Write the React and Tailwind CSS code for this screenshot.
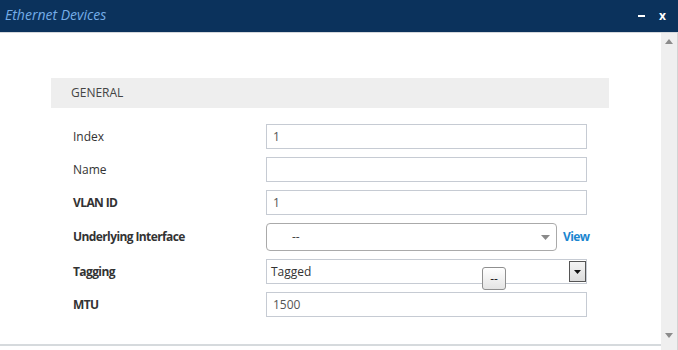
import React from 'react'

const rows = [
  { label: 'Index', value: '1' },
  { label: 'Name', value: '' },
  { label: 'VLAN ID', value: '1', bold: true },
]

const TextBox = ({ value }) => (
  <div className="h-[25px] w-[321px] border border-[#c6cbd3] bg-white pl-[6px] flex items-center text-[12px] text-[#555]">
    {value}
  </div>
)

const Label = ({ children, bold }) => (
  <div className={`text-[12px] text-[#333] ${bold ? 'font-bold tracking-[-0.6px]' : ''}`}>{children}</div>
)

export default function App() {
  return (
    <div className="w-[678px] h-[350px] bg-white overflow-hidden flex flex-col" style={{ fontFamily: '"Open Sans", sans-serif' }}>
      {/* title bar */}
      <div className="h-[32px] bg-[#0b325c] flex items-center justify-between shrink-0">
        <span className="pl-[5px] italic text-[14px] text-[#75ade8] -mt-[4px]">Ethernet Devices</span>
        <div className="flex items-center gap-[14px] pr-[12px] -mt-[1px]">
          <div className="w-[7px] h-[2px] bg-white" />
          <span className="text-white text-[12px] font-bold leading-none">x</span>
        </div>
      </div>
      <div className="h-[1px] bg-[#d5d8dc] shrink-0" />

      <div className="flex flex-1 min-h-0">
        <div className="flex-1 flex flex-col">
          <div className="flex-1 relative pt-[45px] pl-[51px]">
            {/* section header */}
            <div className="w-[558px] h-[30px] bg-[#eeeeee] flex items-center pl-[20px] text-[12px] text-[#444]">
              GENERAL
            </div>

            <div className="mt-[16px] flex flex-col gap-[8px]">
              {rows.map((r) => (
                <div key={r.label} className="flex items-center">
                  <div className="w-[215px] pl-[22px]">
                    <Label bold={r.bold}>{r.label}</Label>
                  </div>
                  <TextBox value={r.value} />
                </div>
              ))}

              <div className="flex items-center">
                <div className="w-[215px] pl-[22px]">
                  <Label bold>Underlying Interface</Label>
                </div>
                <div className="h-[28px] w-[291px] border border-[#aaaaaa] rounded-[4px] bg-white flex items-center justify-between pl-[25px] pr-[6px] text-[12px] text-[#444]">
                  <span>--</span>
                  <svg width="9" height="5" viewBox="0 0 9 5">
                    <path d="M0 0 L9 0 L4.5 5 Z" fill="#8a8a8a" />
                  </svg>
                </div>
                <span className="ml-[6px] text-[12px] font-bold tracking-[-0.6px] text-[#1a86d0]">View</span>
              </div>

              <div className="flex items-center">
                <div className="w-[215px] pl-[22px]">
                  <Label bold>Tagging</Label>
                </div>
                <div className="h-[25px] w-[321px] border border-[#c6cbd3] bg-white flex items-stretch text-[12px] text-[#333]">
                  <div className="flex-1 flex items-center pl-[4px]">Tagged</div>
                  <div className="w-[17px] my-[1px] border border-[#555] bg-gradient-to-b from-[#f4f4f4] to-[#dcdcdc] flex items-center justify-center">
                    <svg width="7" height="4" viewBox="0 0 7 4">
                      <path d="M0 0 L7 0 L3.5 4 Z" fill="#111" />
                    </svg>
                  </div>
                </div>
              </div>

              <div className="flex items-center">
                <div className="w-[215px] pl-[22px]">
                  <Label bold>MTU</Label>
                </div>
                <TextBox value="1500" />
              </div>
            </div>

            {/* floating button */}
            <div className="absolute left-[482px] top-[234px] w-[24px] h-[23px] rounded-[3px] border border-[#8f8f8f] bg-gradient-to-b from-white to-[#e4e4e4] flex items-center justify-center text-[12px] text-[#222] leading-none">
              --
            </div>
          </div>
          <div className="h-[2px] bg-[#d6dadd] shrink-0" />
          <div className="h-[4px] shrink-0" />
        </div>

        {/* scrollbar */}
        <div className="w-[17px] bg-[#efefef] border-r border-[#d3d3d3] flex flex-col items-center justify-between pt-[6px] pb-[12px] pr-[1px]">
          <svg width="8" height="5" viewBox="0 0 8 5">
            <path d="M4 0 L8 5 L0 5 Z" fill="#8c8c8c" />
          </svg>
          <svg width="8" height="5" viewBox="0 0 8 5">
            <path d="M0 0 L8 0 L4 5 Z" fill="#8c8c8c" />
          </svg>
        </div>
      </div>
    </div>
  )
}
